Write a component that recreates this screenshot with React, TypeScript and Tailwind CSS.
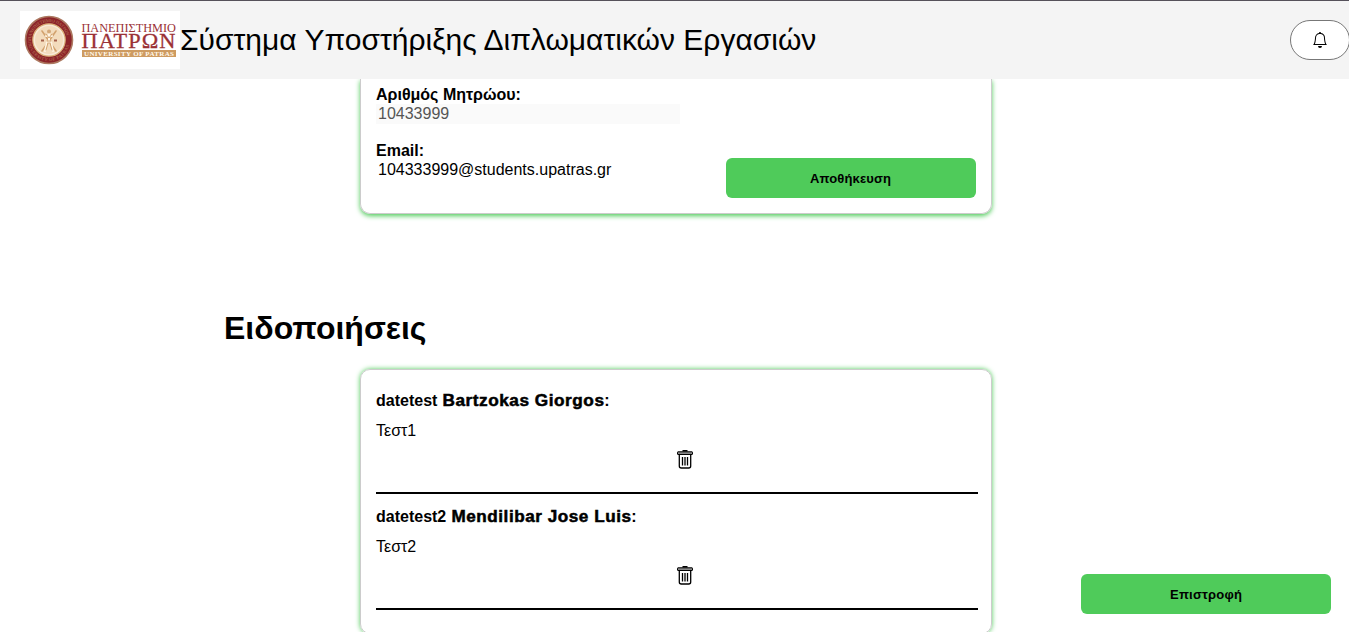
import { BsBell } from "react-icons/bs";

const notifications = [
  { title: "datetest", name: "Bartzokas Giorgos", text: "Τεστ1", width: 162 },
  { title: "datetest2", name: "Mendilibar Jose Luis", text: "Τεστ2", width: 180 },
];

function UniversityLogo() {
  return (
    <svg width="160" height="58" viewBox="0 0 160 58" className="shrink-0 bg-white">
      <circle cx="29" cy="29" r="23.5" fill="#8c2429" stroke="#ac7860" strokeWidth="1.6" />
      <circle cx="29" cy="29" r="16.2" fill="#f8ead8" stroke="#d9ad75" strokeWidth="1.2" />
      <circle cx="29" cy="29" r="14" fill="#f3dcbd" />
      <defs>
        <path id="sealTop" d="M11 29a18 18 0 0 1 36 0" />
        <path id="sealBottom" d="M8 29a21 21 0 0 0 42 0" />
      </defs>
      <g fill="#b87a58" fontFamily="Liberation Serif, serif" fontSize="4.5">
        <text textLength="52"><textPath href="#sealTop">ΠΑΝΕΠΙΣΤΗΜΙΟ ΠΑΤΡΩΝ</textPath></text>
        <text textLength="60"><textPath href="#sealBottom">UNIVERSITY OF PATRAS</textPath></text>
      </g>
      <g fill="none" stroke="#d2a26e" strokeWidth="1.6" strokeLinecap="round">
        <path d="M22 20l14 20M36 20L22 40" />
        <path d="M29 21v10M26 25h6M27 31l-2 9M31 31l2 9" stroke="#fff5e4" strokeWidth="2" />
        <path d="M26 23l3 4 3-4M27 30h4M26 39l2-7M32 39l-2-7" strokeWidth="1" />
      </g>
      <circle cx="29" cy="20.5" r="2" fill="#d4a878" />
      <path d="M21 29.5h3M34 29.5h3" stroke="#a5604b" strokeWidth="1.8" />
      <g fontFamily="Liberation Serif, serif" fill="#9b3136">
        <text x="61.5" y="20.5" fontSize="13" textLength="94.5" lengthAdjust="spacingAndGlyphs">ΠΑΝΕΠΙΣΤΗΜΙΟ</text>
        <text x="61.5" y="36.8" fontSize="20" letterSpacing="1" textLength="95" lengthAdjust="spacingAndGlyphs" stroke="#9b3136" strokeWidth="0.3">ΠΑΤΡΩΝ</text>
        <rect x="62" y="39" width="94" height="7" fill="#ce9b60" />
        <text x="64" y="44.9" fontSize="7" fontWeight="700" fill="#fff8ec" textLength="90">UNIVERSITY OF PATRAS</text>
      </g>
    </svg>
  );
}

function TrashIcon() {
  return (
    <svg width="16" height="20" viewBox="0 0 16 20" fill="none" stroke="black">
      <path d="M5.5 0.8h5" strokeWidth="1.6" />
      <rect x="0.5" y="1.8" width="15" height="2.7" rx="0.5" fill="#888" strokeWidth="1" />
      <path d="M2.3 4.500v11.500q0 2 2 2h7.400q2 0 2-2V4.500" strokeWidth="1.300" />
      <path d="M5.500 7v8.500M8 7v8.500M10.500 7v8.500" strokeWidth="1.300" />
    </svg>
  );
}

function GreenButton({ label, textWidth }: { label: string; textWidth: number }) {
  return (
    <button aria-label={label} className="flex h-10 w-[250px] items-center justify-center rounded-md bg-[#4fcb5a] pr-px">
      <svg width={textWidth} height="20" className="overflow-visible">
        <text x="0" y="14.5" fontFamily="Liberation Sans, sans-serif" fontWeight="700" fontSize="13" textLength={textWidth}>
          {label}
        </text>
      </svg>
    </button>
  );
}

export default function App() {
  return (
    <div className="flex h-[632px] w-full flex-col overflow-hidden bg-white font-['Liberation_Sans',Arial,sans-serif] text-base text-black">
      <header className="z-10 flex h-[79px] shrink-0 items-center justify-between border-t border-[#55515a] bg-[#f4f4f4] pl-5">
        <div className="flex items-center">
          <UniversityLogo />
          <h1 className="text-[30px] leading-9 whitespace-nowrap">Σύστημα Υποστήριξης Διπλωματικών Εργασιών</h1>
        </div>
        <button aria-label="Ειδοποιήσεις" className="-mr-px flex h-10 w-[60px] items-center justify-center rounded-[20px] border border-[#777] bg-white">
          <BsBell size={16} />
        </button>
      </header>

      <main className="flex grow flex-col">
        <section className="ml-[360px] flex h-[135px] w-[632px] shrink-0 justify-between rounded-b-[10px] border border-t-0 border-[#ccc] px-[15px] shadow-[0_2px_5px_#4fcb5a]">
          <div className="w-[304px] pt-1.5 leading-[19px]">
            <div className="font-bold">Αριθμός Μητρώου:</div>
            <div className="h-5 bg-[#fafafa] pl-0.5 text-[#555]">10433999</div>
            <div className="mt-[17px] font-bold">Email:</div>
            <div className="pl-0.5">104333999@students.upatras.gr</div>
          </div>
          <div className="flex items-end pb-[15px]">
            <GreenButton label="Αποθήκευση" textWidth={81} />
          </div>
        </section>

        <h2 className="mt-24 ml-56 text-[32px] leading-9 font-bold">Ειδοποιήσεις</h2>

        <div className="mt-[23px] flex shrink-0 items-start justify-between pr-[18px] pl-[360px]">
          <section className="h-[265px] w-[632px] rounded-[10px] border border-[#ccc] pt-[22px] pr-[13px] pl-[15px] shadow-[0_0_5px_#4fcb5a]">
            {notifications.map((item) => (
              <article key={item.title} className="mb-[14px] h-[102px] border-b-2 border-black">
                <div className="flex h-[18px] gap-[5px] leading-[18px] font-bold whitespace-nowrap">
                  <span>{item.title}</span>
                  <span className="flex">
                    <svg width={item.width} height="18" className="overflow-visible">
                      <text x="0.5" y="14" fontSize="16" letterSpacing="0.5" strokeWidth="0.5" stroke="black" textLength={item.width} lengthAdjust="spacingAndGlyphs">
                        {item.name}
                      </text>
                    </svg>
                    :
                  </span>
                </div>
                <p className="mt-3 leading-[18px]">{item.text}</p>
                <div className="flex justify-center pt-2.5 pl-4">
                  <button aria-label="Διαγραφή">
                    <TrashIcon />
                  </button>
                </div>
              </article>
            ))}
          </section>
          <div className="pt-[205px]">
            <GreenButton label="Επιστροφή" textWidth={72} />
          </div>
        </div>
      </main>
    </div>
  );
}
